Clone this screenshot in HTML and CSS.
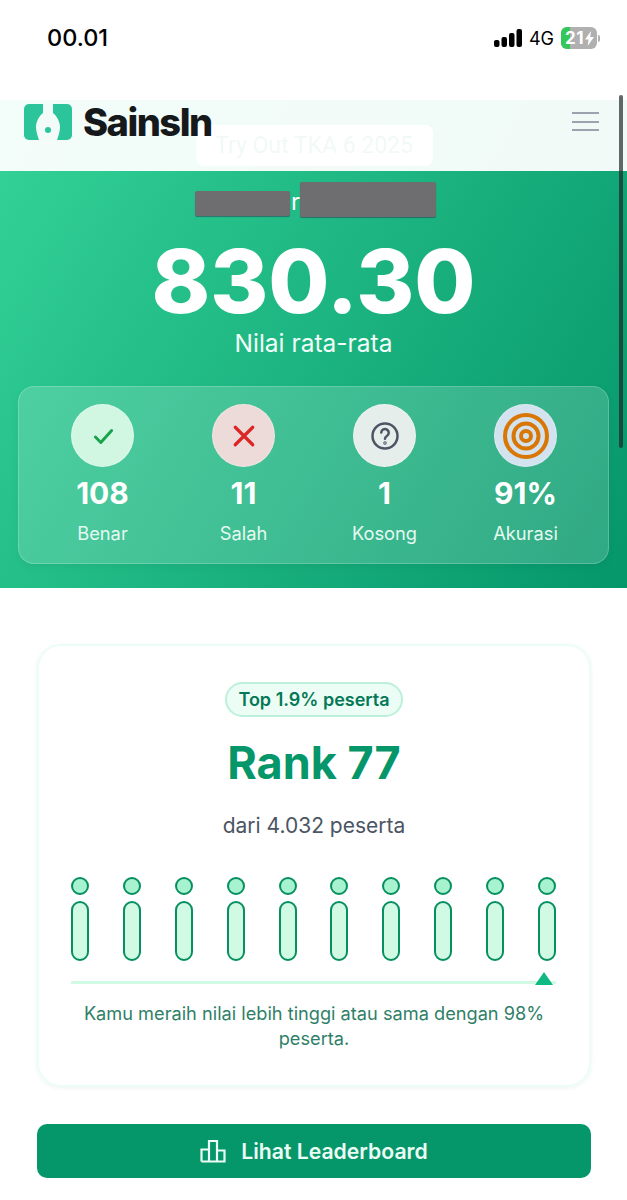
FILE: index.html
```html
<!DOCTYPE html>
<html lang="id">
<head>
  <meta charset="UTF-8" />
  <meta name="viewport" content="width=device-width, initial-scale=1.0"/>
  <title>Hasil Try Out — SainsIn</title>
  <link rel="stylesheet" href="styles.css">
</head>
<body>

<div class="status-bar">
  <span class="clock">00.01</span>
  <div class="status-icons">
    <svg class="signal" width="29" height="18" viewBox="0 0 29 18">
      <rect x="0" y="11" width="5.5" height="7" rx="2" />
      <rect x="7.5" y="8" width="5.5" height="10" rx="2" />
      <rect x="15" y="4" width="5.5" height="14" rx="2" />
      <rect x="22.5" y="0" width="5.5" height="18" rx="2" />
    </svg>
    <span class="network">4G</span>
    <div class="battery">
      <div class="battery-fill"></div>
      <span class="battery-text">21</span>
      <svg class="bolt" width="9" height="15" viewBox="0 0 9 15"><path d="M6 0 L0 8.5 H3.6 L2.6 15 L9 6 H5.2 Z" /></svg>
    </div>
    <span class="battery-cap"></span>
  </div>
</div>

<header>
  <div class="logo">
    <svg width="48" height="36" viewBox="0 0 48 36">
      <rect width="48" height="36" rx="5" fill="#2cc59b" />
      <path d="M19 0 H29 V9 C33 12 36 18 36 23 C36 28 34 33 33 36 H15 C14 33 12 28 12 23 C12 18 15 12 19 9 Z" fill="#f2fbf8" />
      <circle cx="24" cy="26" r="3" fill="#2cc59b" />
    </svg>
    <span class="logo-text">SainsIn</span>
  </div>
  <div class="burger"><span></span><span></span><span></span></div>
</header>

<div class="scroll-thumb"></div>

<section class="hero">
  <div class="exam-pill">Try Out TKA 6 2025</div>
  <div class="name-row">
    <span class="redact redact-left"></span>
    <span class="name-letter">r</span>
    <span class="redact redact-right"></span>
  </div>
  <div class="score">830.30</div>
  <div class="score-label">Nilai rata-rata</div>

  <div class="stats">
    <div class="stat">
      <div class="stat-icon icon-right">
        <svg width="26" height="26" viewBox="0 0 24 24" fill="none" stroke="#16a34a" stroke-width="2.700" stroke-linecap="round" stroke-linejoin="round"><path d="M5 13 L10 18 L20 7" /></svg>
      </div>
      <div class="stat-value">108</div>
      <div class="stat-label">Benar</div>
    </div>
    <div class="stat">
      <div class="stat-icon icon-wrong">
        <svg width="30" height="30" viewBox="0 0 24 24" fill="none" stroke="#dc2626" stroke-width="2.600" stroke-linecap="round"><path d="M5 5 L19 19 M19 5 L5 19" /></svg>
      </div>
      <div class="stat-value">11</div>
      <div class="stat-label">Salah</div>
    </div>
    <div class="stat">
      <div class="stat-icon icon-empty">
        <svg width="30" height="30" viewBox="0 0 24 24" fill="none" stroke="#4b5563" stroke-width="2" stroke-linecap="round"><circle cx="12" cy="12" r="10" /><path d="M9 9.200 A3 3 0 1 1 13.500 12 C12.500 12.600 12 13.200 12 14.200" /><circle cx="12" cy="17.500" r="0.4" /></svg>
      </div>
      <div class="stat-value">1</div>
      <div class="stat-label">Kosong</div>
    </div>
    <div class="stat">
      <div class="stat-icon icon-acc">
        <svg width="46" height="46" viewBox="0 0 46 46" fill="none" stroke="#d97706" stroke-width="4"><circle cx="23" cy="23" r="21" /><circle cx="23" cy="23" r="12.500" /><circle cx="23" cy="23" r="5" /></svg>
      </div>
      <div class="stat-value">91%</div>
      <div class="stat-label">Akurasi</div>
    </div>
  </div>
</section>

<section class="content">
  <div class="rank-card">
    <div class="top-pill">Top 1.9% peserta</div>
    <h2 class="rank">Rank 77</h2>
    <p class="rank-sub">dari 4.032 peserta</p>

    <div class="people">
      <div class="person"><span class="head"></span><span class="body-bar"></span></div>
      <div class="person"><span class="head"></span><span class="body-bar"></span></div>
      <div class="person"><span class="head"></span><span class="body-bar"></span></div>
      <div class="person"><span class="head"></span><span class="body-bar"></span></div>
      <div class="person"><span class="head"></span><span class="body-bar"></span></div>
      <div class="person"><span class="head"></span><span class="body-bar"></span></div>
      <div class="person"><span class="head"></span><span class="body-bar"></span></div>
      <div class="person"><span class="head"></span><span class="body-bar"></span></div>
      <div class="person"><span class="head"></span><span class="body-bar"></span></div>
      <div class="person"><span class="head"></span><span class="body-bar"></span></div>
    </div>
    <div class="track"><span class="marker"></span></div>

    <p class="rank-note">Kamu meraih nilai lebih tinggi atau sama dengan 98% peserta.</p>
  </div>

  <button class="leaderboard-btn">
    <svg width="26" height="24" viewBox="0 0 26 24" fill="none" stroke="#ecfdf5" stroke-width="2.200"><path d="M1.500 22.500 V10.500 H9 V22.500 M9 22.500 V2 H17 V22.500 M17 11.500 H24.500 V22.500 H1.500" /></svg>
    Lihat Leaderboard
  </button>
</section>

</body>
</html>
```

FILE: styles.css
```css
* { box-sizing: border-box; }
html, body { height: 1200px; overflow: hidden; }
body {
  margin: 0;
  position: relative;
  font-family: 'Inter', 'Liberation Sans', sans-serif;
  background: #fff;
  color: #111;
}

/* status bar */
.status-bar {
  height: 100px;
  padding: 24px 27px 0 47px;
  display: flex;
  justify-content: space-between;
  align-items: flex-start;
}
.clock {
  font-size: 23.500px;
  font-weight: 500;
  line-height: 28px;
  color: #000;
}
.status-icons {
  display: flex;
  align-items: center;
  height: 28px;
}
.signal { fill: #000; margin-right: 6px; }
.network {
  font-size: 18px;
  font-weight: 400;
  color: #000;
  margin-right: 7px;
}
.battery {
  position: relative;
  width: 36px;
  height: 22px;
  border-radius: 6px;
  background: #b0b0b0;
  overflow: hidden;
  display: flex;
  align-items: center;
  padding-left: 4px;
}
.battery-fill {
  position: absolute;
  left: 0; top: 0; bottom: 0;
  width: 9px;
  background: #34c759;
}
.battery-text {
  position: relative;
  font-size: 17px;
  font-weight: 700;
  color: #fff;
  letter-spacing: 0.5px;
}
.bolt { position: relative; fill: #fff; margin-left: 1px; }
.battery-cap {
  width: 2px;
  height: 7px;
  margin-left: 1px;
  border-radius: 0 2px 2px 0;
  background: #b0b0b0;
}

/* header lies over the hero */
header {
  position: absolute;
  top: 100px; left: 0;
  width: 100%;
  height: 71px;
  background: rgba(255,255,255,0.94);
  display: flex;
  justify-content: space-between;
  align-items: flex-start;
  padding: 4px 28px 0 24px;
  z-index: 10;
}
.logo {
  display: flex;
  align-items: center;
  gap: 11px;
}
.logo-text {
  font-size: 38px;
  font-weight: 800;
  letter-spacing: -1.500px;
  color: #16191c;
  line-height: 36px;
}
.burger {
  display: flex;
  flex-direction: column;
  gap: 6.500px;
  width: 27px;
  margin-top: 8px;
}
.burger span { height: 2px; background: #9ca3af; }

.scroll-thumb {
  position: absolute;
  top: 95px; left: 619px;
  width: 4px;
  height: 353px;
  border-radius: 2px;
  background: rgba(30,40,40,0.7);
  z-index: 20;
}

/* hero */
.hero {
  height: 488px;
  padding-top: 25px;
  background: linear-gradient(120deg, #34d399 0%, #059669 100%);
  display: flex;
  flex-direction: column;
  align-items: center;
  color: #fff;
}
.exam-pill {
  width: 237px;
  height: 41px;
  border-radius: 8px;
  background: #fff;
  color: #059669;
  font-size: 23px;
  line-height: 41px;
  text-align: center;
  font-family: 'Roboto', sans-serif;
  margin-left: 1px;
}
.name-row {
  display: flex;
  align-items: flex-end;
  height: 35px;
  margin-top: 16px;
  margin-left: 3px;
}
.redact {
  display: block;
  background: #6e6e70;
  border-radius: 2px;
  box-shadow: 0 1px 1px rgba(40,40,80,0.5);
}
.redact-left { width: 95px; height: 25px; margin-bottom: 1px; }
.redact-right { width: 136px; height: 35px; }
.name-letter {
  width: 10px;
  margin-left: 1px;
  margin-right: -1px;
  font-size: 24px;
  line-height: 30px;
  text-align: center;
}
.score {
  font-size: 88.500px;
  font-weight: 800;
  line-height: 76px;
  margin-top: 26px;
}
.score-label {
  font-size: 24.500px;
  line-height: 30px;
  margin-top: 9px;
  color: #f0fdf8;
}
.stats {
  width: 591px;
  height: 178px;
  margin-top: 28px;
  padding: 17px 13px 0;
  display: grid;
  grid-template-columns: repeat(4, 141px);
  border-radius: 16px;
  background: rgba(255,255,255,0.17);
  border: 1px solid rgba(255,255,255,0.2);
  box-shadow: 0 3px 8px rgba(0,0,0,0.05);
}
.stat {
  display: flex;
  flex-direction: column;
  align-items: center;
}
.stat-icon {
  width: 63px;
  height: 63px;
  border-radius: 50%;
  display: flex;
  align-items: center;
  justify-content: center;
  border: 1px solid rgba(255,255,255,0.3);
}
.icon-right { background: #d1f7e2; }
.icon-wrong { background: #ecdbd9; }
.icon-empty { background: #e6eeec; }
.icon-acc { background: #d2e2ef; }
.stat-value {
  font-size: 30px;
  font-weight: 700;
  line-height: 36px;
  margin-top: 8px;
}
.stat-label {
  font-size: 18.300px;
  line-height: 24px;
  margin-top: 10px;
  color: #e6f9f1;
}

/* rank */
.content { padding: 56px 36px 0 37px; }
.rank-card {
  height: 443px;
  padding-top: 36px;
  border: 2px solid #ecfdf5;
  border-radius: 24px;
  box-shadow: 0 1px 4px rgba(16,120,90,0.08);
  display: flex;
  flex-direction: column;
  align-items: center;
}
.top-pill {
  height: 35px;
  padding: 0 11px;
  border: 2px solid #bcf0da;
  border-radius: 18px;
  background: #ecfdf5;
  color: #047857;
  font-size: 18px;
  font-weight: 600;
  line-height: 31px;
}
.rank {
  margin: 18px 0 0;
  font-size: 45px;
  font-weight: 700;
  line-height: 56px;
  color: #059669;
}
.rank-sub {
  margin: 21px 0 0;
  font-size: 21px;
  line-height: 28px;
  color: #4b5563;
}
.people {
  width: 485px;
  margin: 37px 1px 0 0;
  display: flex;
  justify-content: space-between;
}
.person {
  display: flex;
  flex-direction: column;
  gap: 6px;
  width: 18px;
}
.head {
  height: 18px;
  border: 2.500px solid #07905f;
  border-radius: 50%;
  background: #a7f3d0;
}
.body-bar {
  height: 60px;
  border: 2.500px solid #07905f;
  border-radius: 9px;
  background: #d1fae5;
}
.track {
  position: relative;
  width: 485px;
  height: 3px;
  margin: 20px 1px 0 0;
  background: #d1fae5;
}
.marker {
  position: absolute;
  right: 3px; bottom: -1px;
  width: 0; height: 0;
  border-left: 9px solid transparent;
  border-right: 9px solid transparent;
  border-bottom: 13px solid #10b981;
}
.rank-note {
  width: 490px;
  margin: 17px 0 0;
  font-size: 18.200px;
  line-height: 25px;
  text-align: center;
  color: #2f7f68;
}
.leaderboard-btn {
  width: 554px;
  height: 54px;
  margin-top: 37px;
  border: none;
  border-radius: 10px;
  background: #059669;
  color: #ecfdf5;
  font-family: inherit;
  font-size: 21.200px;
  font-weight: 600;
  display: flex;
  align-items: center;
  justify-content: center;
  gap: 15px;
}
```
